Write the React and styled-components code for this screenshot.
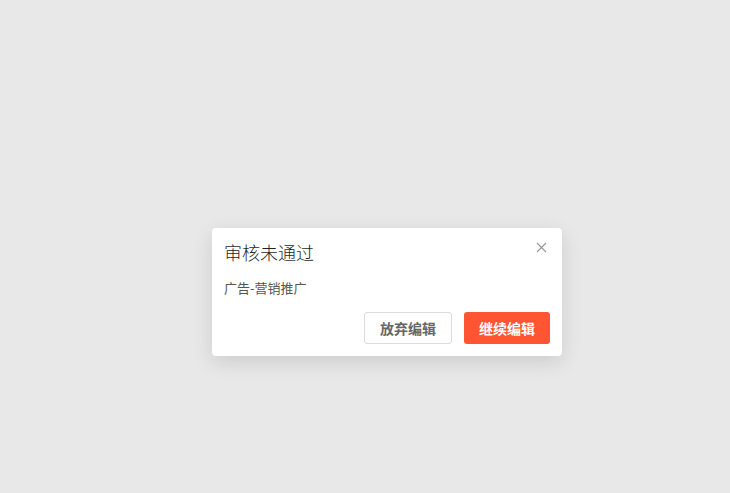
import React from 'react';
import styled, { createGlobalStyle } from 'styled-components';

const GlobalStyle = createGlobalStyle`
    html, body {
        margin: 0;
        padding: 0;
        background: #e8e8e8;
        font-family: "Noto Sans CJK SC", "Noto Sans", sans-serif;
    }
`;

const Overlay = styled.div`
    width: 100vw;
    height: 100vh;
    box-sizing: border-box;
    padding: 228px 0 0 212px;
    background-color: #e8e8e8;
`;

const Dialog = styled.div`
    width: 350px;
    box-sizing: border-box;
    padding: 10px 12px 12px 12px;
    background: #ffffff;
    border-radius: 4px;
    box-shadow: 0 6px 20px rgba(0, 0, 0, 0.12);
    display: flex;
    flex-direction: column;
`;

const Header = styled.div`
    display: flex;
    align-items: center;
    justify-content: space-between;
    height: 28px;
`;

const Title = styled.h3`
    margin: 0;
    font-size: 18px;
    font-weight: 300;
    line-height: 28px;
    color: #1f1f1f;
`;

const CloseButton = styled.button`
    width: 16px;
    height: 16px;
    padding: 0;
    margin-top: -10px;
    margin-right: 1px;
    border: none;
    background: transparent;
    cursor: pointer;
    display: flex;
    align-items: center;
    justify-content: center;
`;

const Content = styled.p`
    margin: 12px 0 0 0;
    font-size: 13px;
    line-height: 20px;
    color: #555555;
`;

const Footer = styled.div`
    display: flex;
    justify-content: flex-end;
    gap: 12px;
    margin-top: 14px;
`;

const Button = styled.button`
    height: 32px;
    padding: 0 15px;
    box-sizing: border-box;
    border-radius: 3px;
    font-family: inherit;
    font-size: 14px;
    font-weight: 700;
    cursor: pointer;
    border: ${(p) => (p.primary ? 'none' : '1px solid #dcdce0')};
    background: ${(p) => (p.primary ? '#ff5533' : '#ffffff')};
    color: ${(p) => (p.primary ? '#ffffff' : '#666666')};
`;

function CloseIcon() {
    return (
        <svg width="11" height="11" viewBox="0 0 11 11">
            <path d="M1 1L10 10M10 1L1 10" stroke="#999999" strokeWidth="1.2" fill="none" />
        </svg>
    );
}

export default function App() {
    return (
        <Overlay>
            <GlobalStyle />
            <Dialog>
                <Header>
                    <Title>审核未通过</Title>
                    <CloseButton aria-label="close"><CloseIcon /></CloseButton>
                </Header>
                <Content>广告-营销推广</Content>
                <Footer>
                    <Button>放弃编辑</Button>
                    <Button primary>继续编辑</Button>
                </Footer>
            </Dialog>
        </Overlay>
    );
}
